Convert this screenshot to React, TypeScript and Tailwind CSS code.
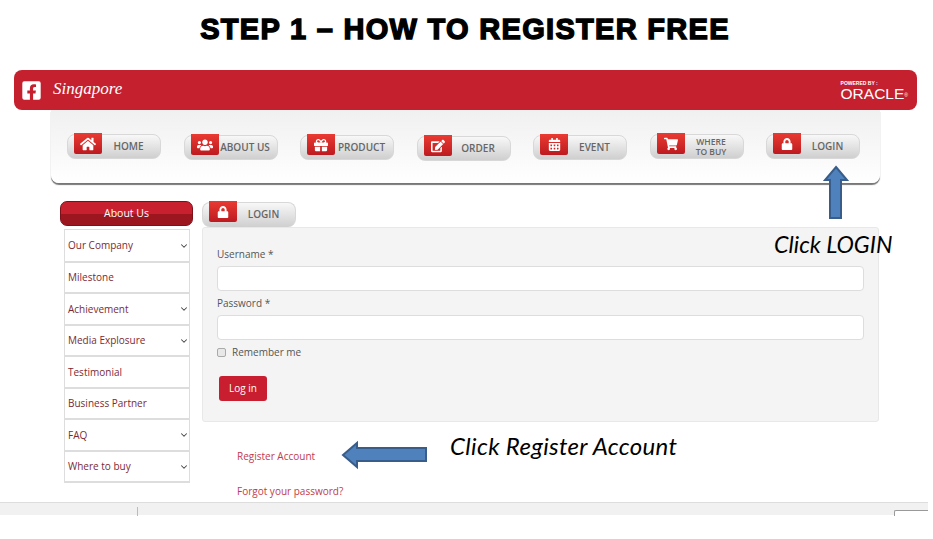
// Registration step screenshot

import type { ReactNode } from 'react';
import { FaCalendarAlt, FaEdit, FaFacebookSquare, FaGift, FaHome, FaLock, FaShoppingCart, FaUsers } from 'react-icons/fa';
import { ChevronDown } from 'lucide-react';

interface NavButtonProps {
  icon: ReactNode;
  label: ReactNode;
  className?: string;
}

function NavButton({ icon, label, className = '' }: NavButtonProps) {
  return (
    <div className={`relative flex h-[25px] w-[94px] flex-shrink-0 items-center rounded-[8px] border border-[#d8d8d8] bg-gradient-to-b from-[#f8f8f8] to-[#cfcfcf] pb-[2px] font-['Open_Sans',sans-serif] ${className}`}>
      <div className="absolute -top-[2px] left-[6px] flex h-[21px] w-[28px] items-center justify-center rounded-b-[2px] bg-gradient-to-b from-[#ea3a32] to-[#bd1a20] text-white">
        {icon}
      </div>
      <div className="ml-[29px] flex-1 text-center text-[10px] font-semibold leading-[10px] text-[#666666]">{label}</div>
    </div>
  );
}

const menuItems = [
  { name: 'Our Company', sub: true },
  { name: 'Milestone', sub: false },
  { name: 'Achievement', sub: true },
  { name: 'Media Explosure', sub: true },
  { name: 'Testimonial', sub: false },
  { name: 'Business Partner', sub: false },
  { name: 'FAQ', sub: true },
  { name: 'Where to buy', sub: true },
];

function Sidebar() {
  return (
    <div className="w-[133px] flex-shrink-0">
      <div className="relative h-[25px] overflow-hidden rounded-[7px] border border-[#7d1019] bg-gradient-to-b from-[#c92030] from-50% to-[#9c1620] to-50% text-center text-[10.5px] leading-[23px] text-white">
        About Us
      </div>
      <div className="ml-[4px] mt-[3px] w-[126px] border border-b-2 border-[#dddddd]">
        {menuItems.map((item, i) => (
          <div
            key={item.name}
            className={`flex items-center justify-between pl-[3px] pt-[1px] text-[10px] text-[#7b2a33] ${i > 0 ? 'h-[31.5px] border-t-2 border-[#dddddd]' : 'h-[30.5px]'}`}
          >
            <span>{item.name}</span>
            <span className={item.sub ? 'block' : 'hidden'}>
              <ChevronDown size={10} strokeWidth={2.5} className="text-[#444444]" />
            </span>
          </div>
        ))}
      </div>
    </div>
  );
}

function LoginPanel() {
  return (
    <div className="ml-[9px] w-[677px]">
      <NavButton icon={<FaLock size={12} />} label="LOGIN" className="mt-[1px] border-b-0" />
      <div className="h-[195px] rounded-[3px] border border-[#e8e8e8] bg-[#f4f4f4] px-[14px] pt-[20px] text-[10px] text-[#555555]">
        <div className="leading-[13px]">Username *</div>
        <div className="mt-[5px] h-[25px] w-[647px] rounded-[4px] border border-[#dddddd] bg-white" />
        <div className="mt-[6px] leading-[13px]">Password *</div>
        <div className="mt-[5px] h-[25px] w-[647px] rounded-[4px] border border-[#dddddd] bg-white" />
        <div className="mt-[6px] flex items-center gap-[6px] leading-[13px]">
          <span className="h-[9px] w-[9px] rounded-[2px] border border-[#aaaaaa] bg-[#e8e8e8]" />
          <span>Remember me</span>
        </div>
        <button className="ml-[2px] mt-[17px] h-[25px] w-[48px] rounded-[3px] bg-[#c81e30] text-[10px] text-white">Log in</button>
      </div>
      <div className="ml-[35px] mt-[28px] text-[10px] leading-[13px] text-[#c23a4c]">Register Account</div>
      <div className="ml-[35px] mt-[22px] text-[10px] leading-[13px] text-[#c23a4c]">Forgot your password?</div>
    </div>
  );
}

export default function App() {
  return (
    <div className="relative h-[539px] w-[933px] overflow-hidden bg-white font-['Open_Sans',sans-serif]">
      <h1 className="h-[70px] pr-[3px] pt-[11px] text-center font-['Liberation_Sans',sans-serif] text-[29px] font-bold leading-[36px] tracking-[1.3px] text-black [-webkit-text-stroke:1.4px_black]">
        STEP 1 – HOW TO REGISTER FREE
      </h1>

      <div className="ml-[14px] flex h-[40px] w-[903px] items-center justify-between rounded-[8px] bg-[#c4202e] pl-[7px] pr-[9px] text-white">
        <div className="flex items-center gap-[11px]">
          <FaFacebookSquare size={21} />
          <span className="mb-[3px] font-['Liberation_Serif',serif] text-[17px] italic leading-none">Singapore</span>
        </div>
        <div className="flex flex-col font-['Liberation_Sans',sans-serif]">
          <span className="text-[5px] font-bold leading-[7px]">POWERED BY :</span>
          <span className="text-[15.5px] leading-[13px]">ORACLE<sup className="text-[5px]">®</sup></span>
        </div>
      </div>

      <div className="ml-[51px] flex h-[73px] w-[829px] items-start gap-[22.5px] rounded-b-[8px] bg-gradient-to-b from-[#f0f0f0] to-white pl-[16px] pt-[24px] shadow-[0px_2px_1px_#777777]">
        <NavButton icon={<FaHome size={16} />} label="HOME" />
        <NavButton icon={<FaUsers size={16} />} label="ABOUT US" className="mt-[1px]" />
        <NavButton icon={<FaGift size={14} />} label="PRODUCT" className="mt-[1px]" />
        <NavButton icon={<FaEdit size={14} />} label="ORDER" className="mt-[2px]" />
        <NavButton icon={<FaCalendarAlt size={13} />} label="EVENT" className="mt-[1px]" />
        <NavButton icon={<FaShoppingCart size={14} />} label={<span className="text-[8.5px] leading-[9px]">WHERE<br />TO BUY</span>} />
        <NavButton icon={<FaLock size={12} />} label="LOGIN" />
      </div>

      <div className="ml-[60px] mt-[18px] flex h-[301px]">
        <Sidebar />
        <LoginPanel />
      </div>

      <div className="relative h-[13px] w-[928px] border-t border-[#dddddd] bg-[#f1f1f1]">
        <span className="absolute left-[137px] top-[4px] h-[9px] w-px bg-[#bbbbbb]" />
        <span className="absolute left-[894px] top-[7px] h-[6px] w-[34px] rounded-tl-[2px] border-l border-t border-[#999999] bg-white" />
      </div>

      {/* annotations drawn over the screenshot */}
      <svg className="absolute left-0 top-0" width="933" height="539">
        <path d="M836 167 L847 180 L841 180 L841 218 L830 218 L830 180 L825 180 Z" fill="#4f81bd" stroke="#385d8a" strokeWidth="2" />
        <path d="M343 455 L357 443 L357 448 L426 448 L426 461 L357 461 L357 467 Z" fill="#4f81bd" stroke="#385d8a" strokeWidth="2" />
      </svg>
      <div className="absolute left-[774px] top-[229px] font-['Lato',sans-serif] text-[23.3px] italic leading-[30px] text-black">Click LOGIN</div>
      <div className="absolute left-[450px] top-[431px] font-['Lato',sans-serif] text-[24px] italic leading-[30px] tracking-[0.33px] text-black">Click Register Account</div>
    </div>
  );
}
